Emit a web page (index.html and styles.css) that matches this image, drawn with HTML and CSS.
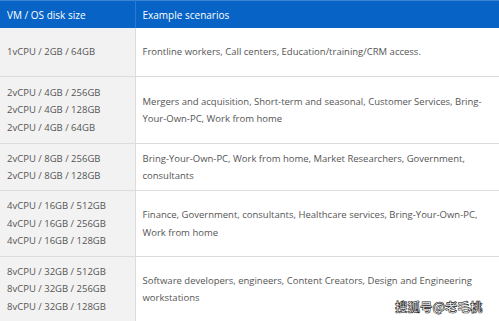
FILE: index.html
```html
<!DOCTYPE html>
<html>
<head>
<meta charset="utf-8">
<link rel="stylesheet" href="styles.css">
</head>
<body>
<table class="spec">
  <colgroup><col class="c1"><col class="c2"></colgroup>
  <thead>
    <tr class="h"><th>VM / OS disk size</th><th>Example scenarios</th></tr>
  </thead>
  <tbody>
    <tr class="r1"><td>1vCPU / 2GB / 64GB</td><td>Frontline workers, Call centers, Education/training/CRM access.</td></tr>
    <tr class="r2"><td>2vCPU / 4GB / 256GB<br>2vCPU / 4GB / 128GB<br>2vCPU / 4GB / 64GB</td><td>Mergers and acquisition, Short-term and seasonal, Customer Services, Bring-Your-Own-PC, Work from home</td></tr>
    <tr class="r3"><td>2vCPU / 8GB / 256GB<br>2vCPU / 8GB / 128GB</td><td>Bring-Your-Own-PC, Work from home, Market Researchers, Government, consultants</td></tr>
    <tr class="r4"><td>4vCPU / 16GB / 512GB<br>4vCPU / 16GB / 256GB<br>4vCPU / 16GB / 128GB</td><td>Finance, Government, consultants, Healthcare services, Bring-Your-Own-PC, Work from home</td></tr>
    <tr class="r5"><td>8vCPU / 32GB / 512GB<br>8vCPU / 32GB / 256GB<br>8vCPU / 32GB / 128GB</td><td>Software developers, engineers, Content Creators, Design and Engineering workstations</td></tr>
  </tbody>
</table>
<div class="mark">搜狐号@老毛桃</div>
</body>
</html>
```
FILE: styles.css
```css
html, body { margin: 0; padding: 0; }
body {
  width: 499px;
  height: 321px;
  overflow: hidden;
  position: relative;
  background: #fff;
  font-family: "Open Sans", "Noto Sans", sans-serif;
}
.spec {
  border-collapse: collapse;
  table-layout: fixed;
  width: 499px;
  font-size: 9.5px;
  color: #555;
}
.c1 { width: 135px; }
.spec th {
  background: #0764c6;
  color: #fff;
  font-weight: normal;
  font-size: 10px;
  text-align: left;
  height: 27px;
  padding: 0 7px;
  border-right: 1px solid #2a7ad0;
  border-top: 1px solid #3b82d0;
}
.spec th:last-child { border-right: 0; }
.spec td {
  padding: 0 7px;
  line-height: 17.5px;
  vertical-align: middle;
  border-bottom: 1px solid #dcdcdc;
}
.spec td:first-child {
  background: #f2f2f2;
  border-right: 1px solid #dcdcdc;
}
.spec td:last-child { padding-right: 15px; }
.r1 td { height: 48px; }
.r2 td { height: 66px; }
.r3 td { height: 46px; }
.r4 td { height: 65px; }
.r5 td { height: 64px; border-bottom: 0; }
.mark {
  position: absolute;
  left: 395px;
  top: 299px;
  font-family: "Noto Sans CJK SC", sans-serif;
  font-size: 12.5px;
  line-height: 15px;
  color: #fff;
  -webkit-text-stroke: 0.6px #222;
  font-weight: bold;
}
```
